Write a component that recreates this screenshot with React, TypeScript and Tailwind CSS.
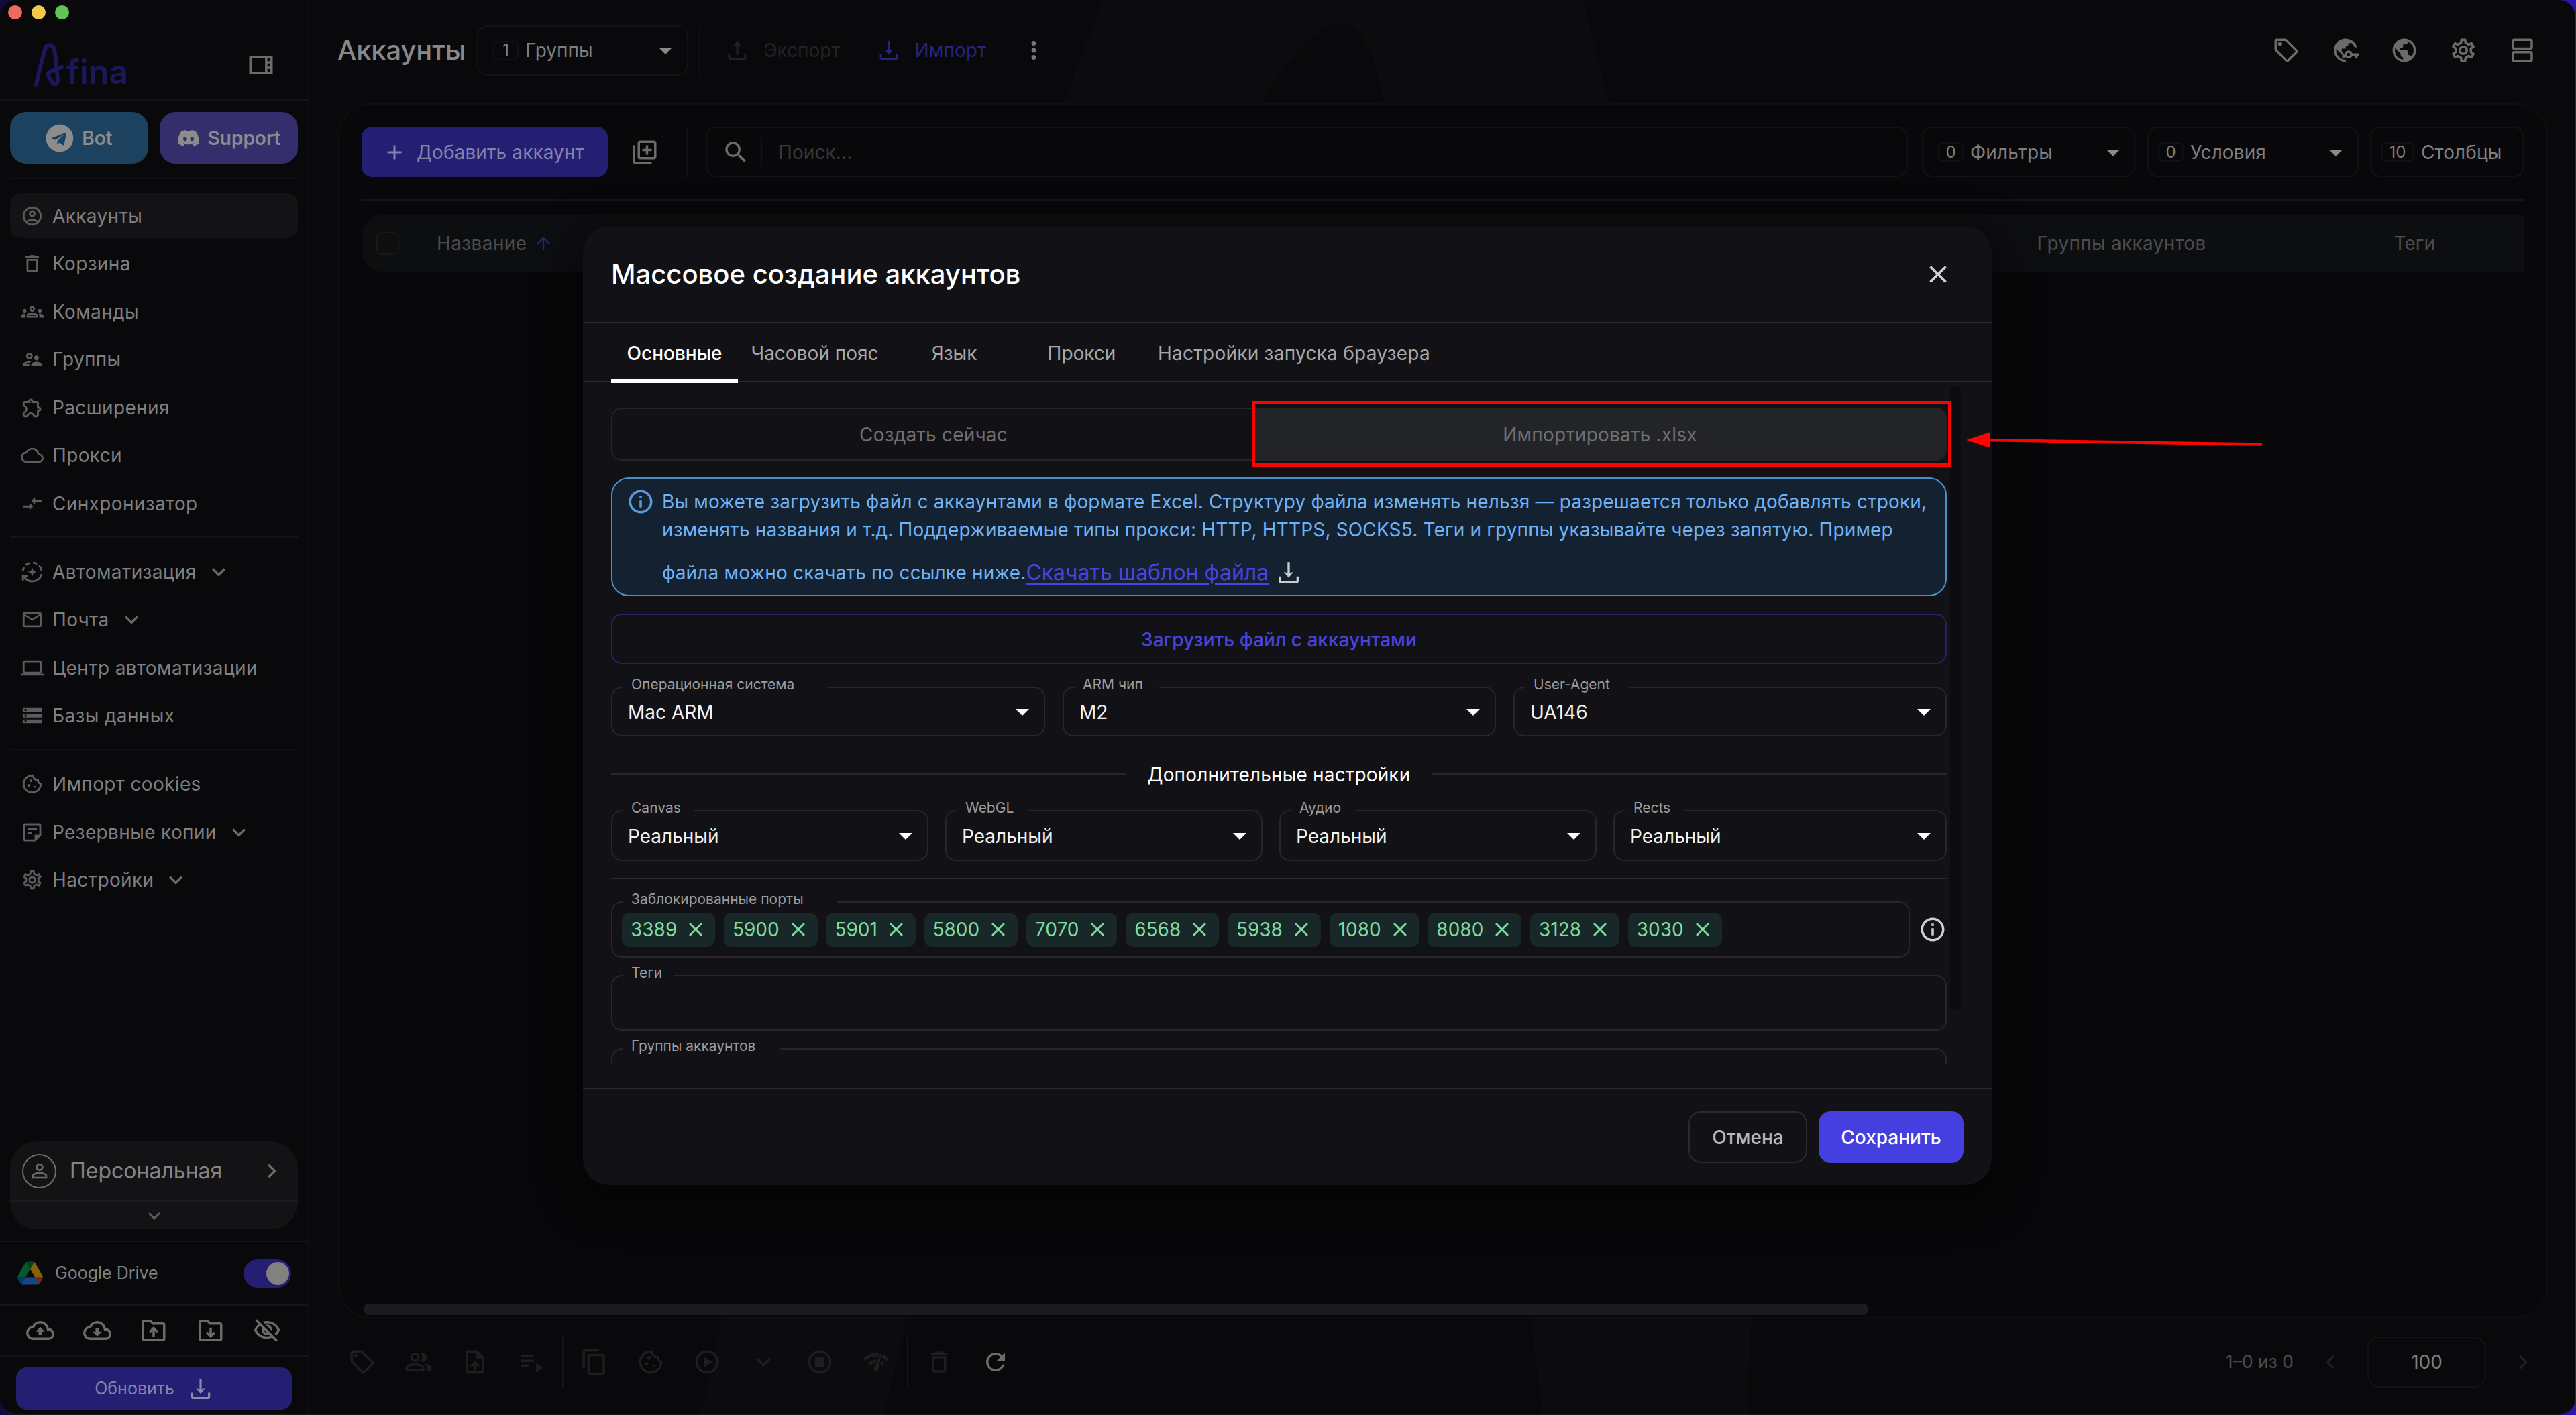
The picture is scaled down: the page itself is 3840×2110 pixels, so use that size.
import React from 'react';
import { FaDiscord, FaTelegram } from 'react-icons/fa';
import {
  MdAdd,
  MdArrowDropDown,
  MdArrowUpward,
  MdClose,
  MdCompareArrows,
  MdContentCopy,
  MdDeleteOutline,
  MdInfoOutline,
  MdKeyboardArrowDown,
  MdKeyboardArrowLeft,
  MdKeyboardArrowRight,
  MdMailOutline,
  MdMoreVert,
  MdNetworkCheck,
  MdOutlineAccountCircle,
  MdOutlineCloud,
  MdOutlineCloudDownload,
  MdOutlineCloudUpload,
  MdOutlineCookie,
  MdOutlineExtension,
  MdOutlineGroups,
  MdOutlineLaptop,
  MdOutlineLibraryAdd,
  MdOutlinePeopleAlt,
  MdOutlinePlayCircle,
  MdOutlineSell,
  MdOutlineSettings,
  MdOutlineStopCircle,
  MdOutlineSupervisorAccount,
  MdOutlineUploadFile,
  MdOutlineViewSidebar,
  MdOutlineVisibilityOff,
  MdPersonOutline,
  MdPlaylistPlay,
  MdPublic,
  MdRefresh,
  MdSearch,
  MdStorage,
} from 'react-icons/md';

interface IconProps {
  className?: string;
}

const DownloadIcon: React.FC<IconProps> = ({ className }) => (
  <svg viewBox="0 0 24 24" className={className} fill="none" stroke="currentColor" strokeWidth="2">
    <path d="M12 2.5v12" />
    <path d="M12 16.5 7.6 11.2l4.4 1.4 4.4-1.4z" fill="currentColor" stroke="none" />
    <path d="M4 15.5v3.7q0 1.3 1.3 1.3h13.4q1.3 0 1.3-1.3v-3.7" />
  </svg>
);

const UploadIcon: React.FC<IconProps> = ({ className }) => (
  <svg viewBox="0 0 24 24" className={className} fill="none" stroke="currentColor" strokeWidth="2">
    <path d="M12 5v11.5" />
    <path d="M12 2.5 7.6 8.3l4.4-1.4 4.4 1.4z" fill="currentColor" stroke="none" />
    <path d="M4 15.5v3.7q0 1.3 1.3 1.3h13.4q1.3 0 1.3-1.3v-3.7" />
  </svg>
);

const AutomationIcon: React.FC<IconProps> = ({ className }) => (
  <svg viewBox="0 0 24 24" className={className} fill="none" stroke="currentColor" strokeWidth="2">
    <path d="M2.2 11a10 10 0 0 1 1.3-4M5.2 4.7A10 10 0 0 1 9 2.5M12.8 2.2a10 10 0 0 1 4.4 1.3M19.2 5.1A10 10 0 0 1 21.8 10.5M22 14.2a10.2 10.2 0 0 1-18.4 3" />
    <path d="M2.2 21v-5h5.2" />
    <path d="M12 7.4 13.3 10.7 16.6 12 13.3 13.3 12 16.6 10.7 13.3 7.4 12 10.7 10.7z" fill="currentColor" stroke="none" />
  </svg>
);

const NoteIcon: React.FC<IconProps> = ({ className }) => (
  <svg viewBox="0 0 24 24" className={className} fill="none" stroke="currentColor" strokeWidth="2">
    <path d="M15 20.5H5q-1.5 0-1.5-1.5V5q0-1.5 1.5-1.5h14q1.5 0 1.5 1.5v10zM7 8.5h10M7 12.5h5" />
    <path d="M14.5 20.5v-6h6z" fill="currentColor" stroke="none" />
  </svg>
);

const FolderIcon: React.FC<IconProps & { up?: boolean }> = ({ className, up }) => (
  <svg viewBox="0 0 24 24" className={className} fill="none" stroke="currentColor" strokeWidth="2">
    <path d="M4 4h5.5l2 2.2H20q1 0 1 1V19q0 1-1 1H4q-1 0-1-1V5q0-1 1-1z" />
    {up ? <path d="M12 17.5v-7M8.7 13.3 12 10l3.3 3.3" /> : <path d="M12 9.5v7M8.7 13.7 12 17l3.3-3.3" />}
  </svg>
);

const SplitIcon: React.FC<IconProps> = ({ className }) => (
  <svg viewBox="0 0 24 24" className={className} fill="none" stroke="currentColor" strokeWidth="2">
    <rect x="4" y="3" width="16" height="7.5" rx="1.2" />
    <rect x="4" y="13.5" width="16" height="7.5" rx="1.2" />
  </svg>
);

const GlobeKeyIcon: React.FC<IconProps> = ({ className }) => (
  <svg viewBox="0 0 24 24" className={className} fill="none" stroke="currentColor" strokeWidth="2">
    <path d="M21 9.5A9 9 0 1 0 12.5 21" />
    <path d="M3 9.5 9.5 16v2.5h2V16L9 13v-2.5h3.5V8h2V6h2V3.5L12 2.5 6 5z" fill="currentColor" stroke="none" />
    <circle cx="14.8" cy="15.5" r="2.4" />
    <path d="M17.2 15.5h6.3M21.5 15.5v3" />
  </svg>
);

const DriveIcon: React.FC<IconProps> = ({ className }) => (
  <svg viewBox="0 0 87.3 78" className={className}>
    <path fill="#0066da" d="m6.6 66.85 3.85 6.65c.8 1.4 1.95 2.5 3.3 3.3l13.75-23.8h-27.5c0 1.55.4 3.1 1.2 4.5z" />
    <path fill="#00ac47" d="m43.65 25-13.75-23.8c-1.35.8-2.5 1.9-3.3 3.3l-25.4 44a9.06 9.06 0 0 0 -1.2 4.5h27.5z" />
    <path fill="#ea4335" d="m73.55 76.8c1.35-.8 2.5-1.9 3.3-3.3l1.6-2.75 7.65-13.25c.8-1.4 1.2-2.95 1.2-4.5h-27.502l5.852 11.5z" />
    <path fill="#00832d" d="m43.65 25 13.75-23.8c-1.35-.8-2.9-1.2-4.5-1.2h-18.5c-1.6 0-3.15.45-4.5 1.2z" />
    <path fill="#2684fc" d="m59.8 53h-32.3l-13.75 23.8c1.35.8 2.9 1.2 4.5 1.2h50.8c1.6 0 3.15-.45 4.5-1.2z" />
    <path fill="#ffba00" d="m73.4 26.5-12.7-22c-.8-1.4-1.95-2.5-3.3-3.3l-13.75 23.8 16.15 28h27.45c0-1.55-.4-3.1-1.2-4.5z" />
  </svg>
);

const Logo = () => (
  <div className="flex items-end text-[#1b1759]">
    <svg viewBox="0 0 48 68" className="h-[68px] w-[48px]" fill="none" stroke="currentColor" strokeWidth="6" strokeLinecap="round" strokeLinejoin="round">
      <path d="M3 63C8 42 12 22 17 8c2-5 10-5 12 0 3 10 5 36 6 50 0 5-7 6-9 1-2-5-7-8-5-13 3-4 14-5 20-9" />
    </svg>
    <span className="-mb-2 text-[50px] leading-[64px] font-semibold">fina</span>
  </div>
);

interface NavItem {
  label: string;
  icon: React.FC<IconProps>;
  active?: boolean;
  expandable?: boolean;
}

const navGroups: NavItem[][] = [
  [
    { label: 'Аккаунты', icon: MdOutlineAccountCircle, active: true },
    { label: 'Корзина', icon: MdDeleteOutline },
    { label: 'Команды', icon: MdOutlineGroups },
    { label: 'Группы', icon: MdOutlineSupervisorAccount },
    { label: 'Расширения', icon: MdOutlineExtension },
    { label: 'Прокси', icon: MdOutlineCloud },
    { label: 'Синхронизатор', icon: MdCompareArrows },
  ],
  [
    { label: 'Автоматизация', icon: AutomationIcon, expandable: true },
    { label: 'Почта', icon: MdMailOutline, expandable: true },
    { label: 'Центр автоматизации', icon: MdOutlineLaptop },
    { label: 'Базы данных', icon: MdStorage },
  ],
  [
    { label: 'Импорт cookies', icon: MdOutlineCookie },
    { label: 'Резервные копии', icon: NoteIcon, expandable: true },
    { label: 'Настройки', icon: MdOutlineSettings, expandable: true },
  ],
];

const Sidebar = () => (
  <aside className="flex h-full w-[461px] shrink-0 flex-col border-r-2 border-[#121214]">
    <div className="flex h-[150px] shrink-0 flex-col border-b-2 border-[#151517]">
      <div className="flex gap-[14px] pt-[8px] pl-[12px]">
        <span className="h-[21px] w-[21px] rounded-full bg-[#ec6a5e]" />
        <span className="h-[21px] w-[21px] rounded-full bg-[#f4c84a]" />
        <span className="h-[21px] w-[21px] rounded-full bg-[#61c554]" />
      </div>
      <div className="flex items-center justify-between pt-[34px] pr-[49px] pl-[51px]">
        <Logo />
        <MdOutlineViewSidebar className="h-[42px] w-[42px] text-[#6b6b6c]" />
      </div>
    </div>

    <div className="flex gap-[17px] px-[15px] pt-[17px] text-[28px] font-semibold text-[#8a8b8d]">
      <button className="flex h-[77px] flex-1 items-center justify-center gap-[12px] rounded-[24px] bg-[#1c4260]">
        <FaTelegram className="h-[42px] w-[42px] text-[#8c8c8d]" />
        Bot
      </button>
      <button className="flex h-[77px] flex-1 items-center justify-center gap-[12px] rounded-[24px] bg-[#342f6c]">
        <FaDiscord className="h-[34px] w-[34px] text-[#8c8c8d]" />
        Support
      </button>
    </div>

    <nav className="mt-[21px] flex flex-col px-[15px]">
      {navGroups.map((group, i) => (
        <div key={i} className={i === 0 ? 'border-t-2 border-[#131315] pt-[21px]' : 'mt-[16px] border-t-2 border-[#131315] pt-[17px]'}>
          <div className="flex flex-col gap-[4.5px]">
            {group.map(({ label, icon: Icon, active, expandable }) => (
              <div
                key={label}
                className={`flex h-[67px] items-center rounded-[16px] pl-[16px] text-[28px] tracking-[0.35px] ${active ? 'bg-[#131315]' : ''}`}
              >
                <Icon className="h-[34px] w-[34px] text-[#5c5c5e]" />
                <span className="ml-[13px] text-[#7f7f80]">{label}</span>
                {expandable && <MdKeyboardArrowDown className="ml-[13px] h-[40px] w-[40px] text-[#6b6b6c]" />}
              </div>
            ))}
          </div>
        </div>
      ))}
    </nav>

    <div className="mt-auto flex flex-col">
      <div className="mx-[15px] mb-[17px] h-[131px] rounded-[40px] bg-[#131315]">
        <div className="flex h-[90px] items-center border-b-2 border-[#1b1b1d] pr-[18px] pl-[18px]">
          <div className="flex h-[51px] w-[51px] items-center justify-center rounded-full border-2 border-[#6c6c6d]">
            <MdPersonOutline className="h-[34px] w-[34px] text-[#6c6c6d]" />
          </div>
          <span className="ml-[20px] text-[32px] text-[#858586]">Персональная</span>
          <MdKeyboardArrowRight className="ml-auto h-[42px] w-[42px] text-[#6c6c6d]" />
        </div>
        <div className="flex h-[41px] items-center justify-center">
          <MdKeyboardArrowDown className="h-[36px] w-[36px] text-[#5c5c5e]" />
        </div>
      </div>
      <div className="flex h-[95px] items-center border-t-2 border-[#151517] pr-[25px] pl-[26px]">
        <DriveIcon className="h-[35px] w-[38px] opacity-50" />
        <span className="ml-[18px] text-[25px] text-[#7f7f80]">Google Drive</span>
        <div className="ml-auto flex h-[42px] w-[71px] items-center justify-end rounded-full bg-[#241f72] pr-[3px]">
          <span className="h-[34px] w-[34px] rounded-full bg-[#838080]" />
        </div>
      </div>
      <div className="flex h-[76px] items-center justify-between border-t-2 border-[#151517] pr-[40px] pl-[39px] text-[#6b6b6c]">
        <MdOutlineCloudUpload className="h-[42px] w-[42px]" />
        <MdOutlineCloudDownload className="h-[42px] w-[42px]" />
        <FolderIcon up className="h-[42px] w-[42px]" />
        <FolderIcon className="h-[42px] w-[42px]" />
        <MdOutlineVisibilityOff className="h-[42px] w-[42px]" />
      </div>
      <div className="border-t-2 border-[#151517] px-[24px] pt-[16px] pb-[6px]">
        <button className="flex h-[63px] w-full items-center justify-center gap-[20px] rounded-[16px] bg-[#241f72] text-[25px] text-[#8583ab]">
          Обновить
          <DownloadIcon className="h-[38px] w-[38px] text-[#8e8ca8]" />
        </button>
      </div>
    </div>
  </aside>
);

const CountBadge: React.FC<{ count: number; wide?: boolean }> = ({ count, wide }) => (
  <span
    className={`flex h-[29px] items-center justify-center rounded-[8px] border-2 border-[#121214] text-[24px] leading-none ${wide ? 'w-[50px]' : 'w-[38px]'}`}
  >
    {count}
  </span>
);

const Header = () => (
  <header className="flex h-[150px] items-center pr-[60px] pl-[42px]">
    <h1 className="text-[39.8px] font-medium text-[#88888a]">Аккаунты</h1>
    <div className="ml-[17px] flex h-[75px] w-[315px] items-center gap-[10px] rounded-[16px] border-2 border-[#131315] pr-[8px] pl-[22px] text-[28px] text-[#7f7f80]">
      <CountBadge count={1} />
      Группы
      <MdArrowDropDown className="ml-auto h-[48px] w-[48px] text-[#8a8a8b]" />
    </div>
    <span className="ml-[16px] h-[76px] w-[2px] bg-[#131315]" />
    <div className="ml-[37px] flex items-center gap-[21px] text-[28px] text-[#222224]">
      <UploadIcon className="h-[36px] w-[36px]" />
      Экспорт
    </div>
    <div className="ml-[54px] flex items-center gap-[21px] text-[28px] tracking-[0.1px] text-[#282280]">
      <DownloadIcon className="h-[36px] w-[36px]" />
      Импорт
    </div>
    <MdMoreVert className="ml-[50px] h-[42px] w-[42px] text-[#78787a]" />
    <div className="ml-auto flex gap-[46px] text-[#6b6b6c]">
      <MdOutlineSell className="h-[42px] w-[42px]" />
      <GlobeKeyIcon className="h-[42px] w-[42px]" />
      <MdPublic className="h-[42px] w-[42px]" />
      <MdOutlineSettings className="h-[42px] w-[42px]" />
      <SplitIcon className="h-[42px] w-[42px]" />
    </div>
  </header>
);

const AccountsPanel = () => (
  <section className="mt-[4px] mr-[43px] ml-[43px] flex h-[1812px] flex-col rounded-[48px] border-2 border-[#0f0f11] bg-[#08080a] px-[33px] pt-[33px]">
    <div className="flex h-[75px] items-center text-[28px] tracking-[0.1px] text-[#7f7f80]">
      <button className="flex h-[75px] w-[367px] items-center rounded-[16px] bg-[#241f72] pl-[31px] text-[#8583ab]">
        <MdAdd className="h-[36px] w-[36px]" />
        <span className="ml-[15px]">Добавить аккаунт</span>
      </button>
      <MdOutlineLibraryAdd className="ml-[34px] h-[42px] w-[42px] text-[#6b6b6c]" />
      <span className="ml-[42px] h-[76px] w-[2px] bg-[#131315]" />
      <div className="ml-[26px] flex h-[75px] w-[1792px] items-center rounded-[16px] border-2 border-[#131315] pl-[22px]">
        <MdSearch className="h-[42px] w-[42px] text-[#6b6b6c]" />
        <span className="ml-[16px] h-[42px] w-[2px] bg-[#151517]" />
        <span className="ml-[24px] text-[#38383a]">Поиск...</span>
      </div>
      <div className="ml-[21px] flex h-[75px] w-[318px] items-center gap-[10px] rounded-[16px] border-2 border-[#131315] pr-[7px] pl-[22px]">
        <CountBadge count={0} />
        Фильтры
        <MdArrowDropDown className="ml-auto h-[48px] w-[48px] text-[#8a8a8b]" />
      </div>
      <div className="ml-[18px] flex h-[75px] w-[315px] items-center gap-[10px] rounded-[16px] border-2 border-[#131315] pr-[8px] pl-[14px]">
        <CountBadge count={0} />
        Условия
        <MdArrowDropDown className="ml-auto h-[48px] w-[48px] text-[#8a8a8b]" />
      </div>
      <div className="ml-[17px] flex h-[75px] w-[230px] items-center gap-[10px] rounded-[16px] border-2 border-[#131315] pl-[14px]">
        <CountBadge count={10} wide />
        Столбцы
      </div>
    </div>
    <div className="mt-[33px] h-[2px] w-full bg-[#141416]" />
    <div className="mt-[21px] flex h-[85px] shrink-0 items-center rounded-l-[32px] bg-[#0d0e10] text-[28px] text-[#4c4c4e]">
      <span className="ml-[22px] h-[34px] w-[34px] rounded-[8px] border-2 border-[#18181a]" />
      <span className="ml-[56px] tracking-[0.4px]">Название</span>
      <MdArrowUpward className="ml-[9px] h-[30px] w-[30px] text-[#282280]" />
      <span className="ml-auto tracking-[0.3px]">Группы аккаунтов</span>
      <span className="mr-[133px] ml-[280px]">Теги</span>
    </div>
    <div className="mt-auto mb-[3px] ml-[3px] h-[17px] w-[2243px] rounded-[8px] bg-[#1b1b1d]" />
  </section>
);

const bulkActions: React.FC<IconProps>[][] = [
  [MdOutlineSell, MdOutlinePeopleAlt, MdOutlineUploadFile, MdPlaylistPlay],
  [MdContentCopy, MdOutlineCookie, MdOutlinePlayCircle, MdKeyboardArrowDown, MdOutlineStopCircle, MdNetworkCheck],
  [MdDeleteOutline],
];

const BottomBar = () => (
  <footer className="flex h-[130px] items-center pr-[59px] pl-[37px] text-[#1e1e20]">
    {bulkActions.map((icons, i) => (
      <React.Fragment key={i}>
        {i > 0 && <span className="mx-[4px] h-[76px] w-[2px] bg-[#151517]" />}
        {icons.map((Icon, j) => (
          <span key={j} className="flex w-[84px] justify-center">
            <Icon className="h-[42px] w-[42px]" />
          </span>
        ))}
      </React.Fragment>
    ))}
    <span className="flex w-[84px] justify-center">
      <MdRefresh className="h-[42px] w-[42px] text-[#6b6b6c]" />
    </span>
    <span className="ml-auto text-[26.5px] text-[#4c4c4e]">1–0 из 0</span>
    <MdKeyboardArrowLeft className="ml-[34px] h-[42px] w-[42px]" />
    <span className="ml-[34px] flex h-[76px] w-[177px] items-center justify-center rounded-[18px] border-2 border-[#131315] text-[28px] text-[#7f7f80]">
      100
    </span>
    <MdKeyboardArrowRight className="ml-[34px] h-[42px] w-[42px]" />
  </footer>
);

// Floating label sits on the field border and masks it
const FieldLabel: React.FC<{ text: string; notch: string }> = ({ text, notch }) => (
  <span className={`absolute -top-[19px] left-[16px] flex h-[28px] items-center bg-[#121216] pl-[12px] text-[21px] whitespace-nowrap text-[#9c9c9e] ${notch}`}>
    {text}
  </span>
);

interface SelectProps {
  label: string;
  value: string;
  notch: string;
  className: string;
}

const Select: React.FC<SelectProps> = ({ label, value, notch, className }) => (
  <div className={`relative flex items-center rounded-[16px] border-2 border-[#27272a] pr-[8px] pl-[23px] text-[28px] text-[#f2f2f3] ${className}`}>
    <FieldLabel text={label} notch={notch} />
    <span className="pt-[2px]">{value}</span>
    <MdArrowDropDown className="ml-auto h-[48px] w-[48px] text-white" />
  </div>
);

const ports = ['3389', '5900', '5901', '5800', '7070', '6568', '5938', '1080', '8080', '3128', '3030'];

const BulkCreateModal = () => (
  <div className="absolute top-[337px] left-[869px] flex h-[1430px] w-[2100px] flex-col rounded-[40px] bg-[#121216] shadow-[0_20px_60px_20px_rgba(0,0,0,0.4)]">
    <div className="flex h-[145px] shrink-0 items-center justify-between border-b-2 border-[#2b2b2e] pr-[58px] pl-[42px]">
      <h2 className="text-[40px] font-medium text-white">Массовое создание аккаунтов</h2>
      <MdClose className="h-[44px] w-[44px] text-[#d0d0d1]" />
    </div>

    <div className="flex h-[88px] shrink-0 border-b-2 border-[#2b2b2e] pl-[42px] text-[28px] text-[#a8a8aa]">
      <div className="flex h-[89px] w-[189px] items-center justify-center border-b-[6px] border-white pt-[7px] font-medium text-white">Основные</div>
      <div className="flex w-[229px] items-center justify-center pt-[3px]">Часовой пояс</div>
      <div className="flex w-[187px] items-center justify-center pt-[3px]">Язык</div>
      <div className="flex w-[193px] items-center justify-center pt-[3px]">Прокси</div>
      <div className="flex w-[440px] items-center justify-center pt-[3px] tracking-[0.25px]">Настройки запуска браузера</div>
    </div>

    <div className="flex h-[1017px] shrink-0 overflow-hidden pl-[42px]">
      <div className="w-[1991px] pt-[38px]">
        <div className="flex h-[79px] overflow-hidden rounded-[16px] border-2 border-[#242427] text-[28px] text-[#6f6f72]">
          <div className="flex w-[957px] items-center justify-center tracking-[0.2px]">Создать сейчас</div>
          <div className="flex flex-1 items-center justify-center bg-[#232428] tracking-[0.2px]">Импортировать .xlsx</div>
        </div>

        <div className="mt-[25px] flex h-[177px] rounded-[26px] border-2 border-[#4791c8] bg-[#132130] pt-[13px] pl-[21px] text-[#6fb3f5]">
          <MdInfoOutline className="h-[42px] w-[42px] text-[#5a9be0]" />
          <div className="ml-[11px] text-[28px] leading-[42px] tracking-[0.15px] whitespace-nowrap">
            <p>Вы можете загрузить файл с аккаунтами в формате Excel. Структуру файла изменять нельзя — разрешается только добавлять строки,</p>
            <p>изменять названия и т.д. Поддерживаемые типы прокси: HTTP, HTTPS, SOCKS5. Теги и группы указывайте через запятую. Пример</p>
            <p className="flex h-[86px] items-center">
              файла можно скачать по ссылке ниже.
              <a className="text-[32px] tracking-normal text-[#4b43e0] underline underline-offset-4">Скачать шаблон файла</a>
              <DownloadIcon className="ml-[10px] h-[40px] w-[40px] text-[#c9cdd2]" />
            </p>
          </div>
        </div>

        <button className="mt-[26px] flex h-[75px] w-full items-center justify-center rounded-[16px] border-2 border-[#26226a] pt-[2px] text-[28px] font-medium text-[#4a43e0]">
          Загрузить файл с аккаунтами
        </button>

        <div className="mt-[34px] flex gap-[26px]">
          <Select label="Операционная система" value="Mac ARM" notch="w-[304px]" className="h-[74px] w-[647px]" />
          <Select label="ARM чип" value="M2" notch="w-[125px]" className="h-[74px] w-[646px]" />
          <Select label="User-Agent" value="UA146" notch="w-[154px]" className="h-[74px] flex-1" />
        </div>

        <div className="mt-[33px] flex h-[46px] items-center text-[28px] tracking-[0.15px] text-white">
          <span className="h-[2px] flex-1 bg-[#27272a]" />
          <span className="px-[32px] pt-[2px]">Дополнительные настройки</span>
          <span className="h-[2px] flex-1 bg-[#27272a]" />
        </div>

        <div className="mt-[31px] flex gap-[25px]">
          <Select label="Canvas" value="Реальный" notch="w-[106px]" className="h-[76px] w-[473px]" />
          <Select label="WebGL" value="Реальный" notch="w-[106px]" className="h-[76px] w-[473px]" />
          <Select label="Аудио" value="Реальный" notch="w-[95px]" className="h-[76px] w-[473px]" />
          <Select label="Rects" value="Реальный" notch="w-[87px]" className="h-[76px] flex-1" />
        </div>

        <div className="mt-[25px] h-[2px] bg-[#2b2b2e]" />

        <div className="mt-[33px] flex items-center">
          <div className="relative flex h-[84px] w-[1936px] items-center gap-[12.7px] rounded-[16px] border-2 border-[#27272a] pl-[14px]">
            <FieldLabel text="Заблокированные порты" notch="w-[318px]" />
            {ports.map((port) => (
              <span key={port} className="flex h-[51px] items-center rounded-[12px] bg-[#182727] pr-[12px] pl-[13px] text-[28px] text-[#7fdc9f]">
                {port}
                <MdClose className="ml-[11px] h-[34px] w-[34px]" />
              </span>
            ))}
          </div>
          <MdInfoOutline className="ml-[13px] h-[42px] w-[42px] shrink-0 text-[#d0d0d1]" />
        </div>

        <div className="relative mt-[26px] h-[83px] rounded-[16px] border-2 border-[#27272a]">
          <FieldLabel text="Теги" notch="w-[76px]" />
        </div>
        <div className="relative mt-[26px] h-[83px] rounded-[16px] border-2 border-[#27272a]">
          <FieldLabel text="Группы аккаунтов" notch="w-[234px]" />
        </div>
      </div>
      <div className="mt-[6px] ml-[5px] h-[930px] w-[16px] rounded-full bg-[#0c0c0e]" />
    </div>

    <div className="mt-auto flex h-[145px] shrink-0 items-center justify-end gap-[17px] border-t-2 border-[#2b2b2e] pr-[42px] text-[28px] font-medium">
      <button className="h-[77px] w-[177px] rounded-[18px] border-2 border-[#2b2b2e] text-[#b8b8ba]">Отмена</button>
      <button className="h-[77px] w-[216px] rounded-[18px] bg-[#453fe0] text-white">Сохранить</button>
    </div>
  </div>
);

// Red callout drawn over the dialog
const Callout = () => (
  <>
    <div className="absolute top-[598px] left-[1866px] h-[98px] w-[1043px] border-[5px] border-[#f60503]" />
    <svg viewBox="0 0 442 28" className="absolute top-[642px] left-[2931px] h-[28px] w-[442px]">
      <path d="M30 14 441 20.5" stroke="#fb0402" strokeWidth="4.5" />
      <path d="M0 14 36 2v24z" fill="#fb0402" />
    </svg>
  </>
);

const Watermark = () => (
  <svg viewBox="0 0 3840 2110" className="absolute inset-0 h-full w-full" fill="#0c0c0f">
    <path d="M1645 0 1585 155 1076 1966 1045 2110H1318L1351 1966 1880 155Q1950 36 1999 36 2045 36 2063 155L2300 2110H2605L2612 1966 2400 155 2360 0z" />
  </svg>
);

export default function App() {
  return (
    <div className="h-[2110px] w-[3840px] overflow-hidden bg-linear-to-r from-[#120a3c] to-[#2c16a8] font-['Inter','Noto_Sans',sans-serif]">
      <div className="relative flex h-[2110px] w-[3839px] overflow-hidden rounded-[24px] border-b-2 border-[#1a1a1c] bg-[#09090b]">
        <Watermark />
        <Sidebar />
        <main className="relative flex-1">
          <Header />
          <AccountsPanel />
          <BottomBar />
        </main>
        <BulkCreateModal />
        <Callout />
      </div>
    </div>
  );
}
